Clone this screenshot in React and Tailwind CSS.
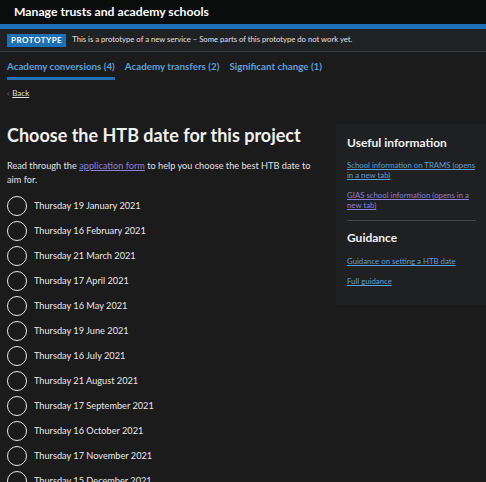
import React from "react";

const dates = [
  "Thursday 19 January 2021",
  "Thursday 16 February 2021",
  "Thursday 21 March 2021",
  "Thursday 17 April 2021",
  "Thursday 16 May 2021",
  "Thursday 19 June 2021",
  "Thursday 16 July 2021",
  "Thursday 21 August 2021",
  "Thursday 17 September 2021",
  "Thursday 16 October 2021",
  "Thursday 17 November 2021",
  "Thursday 15 December 2021",
];

const App = () => {
  return (
    <div
      className="min-h-screen h-[482px] overflow-hidden bg-[#1b1b1c] text-[#e8e8e8]"
      style={{ fontFamily: 'Lato, "Liberation Sans", Arial, sans-serif' }}
    >
      {/* Header */}
      <header className="h-[24px] bg-[#0b0c0c] flex items-center px-[14px]">
        <span className="text-[12.2px] font-bold text-white">Manage trusts and academy schools</span>
      </header>
      <div className="h-[5px] bg-[#1d70b8]" />

      {/* Prototype banner */}
      <div className="h-[23px] bg-[#202122] border-b border-[#3a3b3c] flex items-center px-[7px] gap-[6px]">
        <span className="bg-[#1d70b8] text-white text-[8px] font-bold tracking-[0.5px] px-[4px] h-[13px] flex items-center">PROTOTYPE</span>
        <span className="text-[7.7px] text-[#e0e0e0]">This is a prototype of a new service – Some parts of this prototype do not work yet.</span>
      </div>

      {/* Tabs */}
      <nav className="h-[28px] flex items-stretch px-[7px] gap-[10px]">
        <a className="text-[9.8px] font-bold text-[#5e9fd8] flex items-center border-b-[3px] border-[#1d70b8] pt-[3px]">Academy conversions (4)</a>
        <a className="text-[9.8px] font-bold text-[#5e9fd8] flex items-center border-b-[3px] border-transparent pt-[3px]">Academy transfers (2)</a>
        <a className="text-[9.8px] font-bold text-[#5e9fd8] flex items-center border-b-[3px] border-transparent pt-[3px]">Significant change (1)</a>
      </nav>

      <div className="h-[18px] px-[7px] pt-[8px] flex items-center gap-[3px] text-[8px] leading-[10px]">
        <span className="text-[#9a9a9a]">‹</span>
        <a className="text-[#e0e0e0] underline">Back</a>
      </div>

      <div className="flex pt-[25px]">
        {/* Main column */}
        <main className="flex-1 pl-[7px] pr-[14px]">
          <h1 className="text-[18px] font-bold text-[#f0f0f0] leading-[24px] whitespace-nowrap">Choose the HTB date for this project</h1>
          <p className="text-[9.2px] leading-[14px] mt-[12px] text-[#e0e0e0]">
            Read through the <a className="underline text-[#8f7fd6]">application form</a> to help you choose the best HTB date to aim for.
          </p>
          <div className="mt-[6px] flex flex-col">
            {dates.map((d) => (
              <label key={d} className="flex items-center gap-[7px] h-[25px]">
                <span className="w-[20px] h-[20px] rounded-full border-[1.5px] border-[#e8e8e8] shrink-0" />
                <span className="text-[9.2px] text-[#e8e8e8]">{d}</span>
              </label>
            ))}
          </div>
        </main>

        {/* Sidebar */}
        <aside className="w-[150px] shrink-0 self-start bg-[#1f2021] pl-[11px] pr-[10px] pt-[11px] pb-[19px] mt-[1px]">
          <h2 className="text-[12px] leading-[16px] font-bold text-[#f0f0f0]">Useful information</h2>
          <a className="block mt-[9px] text-[7.8px] leading-[10px] text-[#5e9fd8] underline">School information on TRAMS (opens in a new tab)</a>
          <a className="block mt-[10px] text-[7.8px] leading-[10px] text-[#8f7fd6] underline">GIAS school information (opens in a new tab)</a>
          <div className="border-t border-[#444] mt-[10px]" />
          <h2 className="text-[12px] leading-[16px] font-bold text-[#f0f0f0] mt-[9px]">Guidance</h2>
          <a className="block mt-[10px] text-[7.8px] leading-[10px] text-[#5e9fd8] underline">Guidance on setting a HTB date</a>
          <a className="block mt-[10px] text-[7.8px] leading-[10px] text-[#5e9fd8] underline">Full guidance</a>
        </aside>
      </div>
    </div>
  );
};

export default App;
